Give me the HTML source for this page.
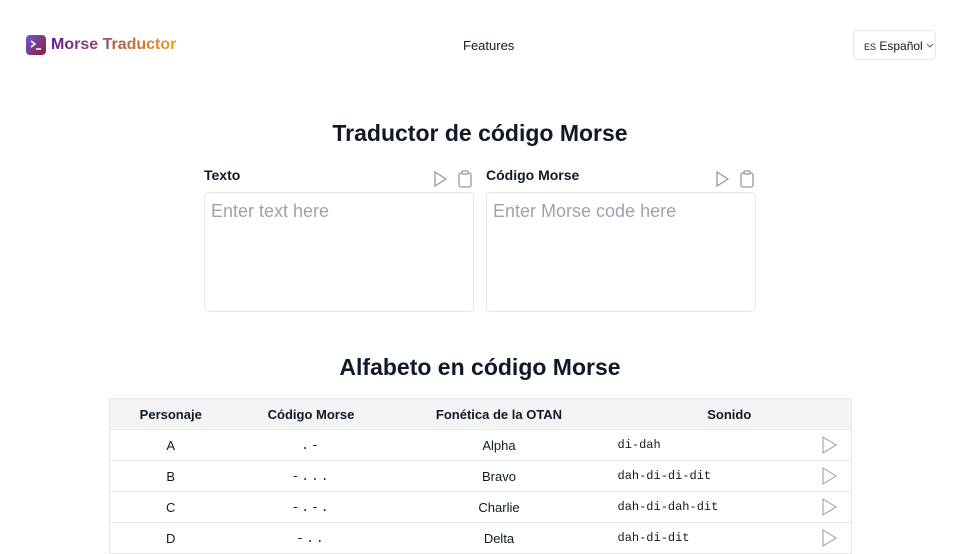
<!DOCTYPE html>
<html><head><meta charset="utf-8"><style>
*{box-sizing:border-box;margin:0;padding:0}
body{width:960px;height:540px;overflow:hidden;background:#fff;font-family:"Liberation Sans",sans-serif;color:#111827;position:relative}
.abs{position:absolute}
.logo{left:26px;top:35px;width:20px;height:20px;border-radius:4px;background:linear-gradient(135deg,#6d5bd0,#8b1d3a)}
.brand{left:51px;top:36px;font-size:16px;font-weight:bold;background:linear-gradient(90deg,#5b1a9a,#f59e0b);-webkit-background-clip:text;color:transparent}
.feat{left:463px;top:38px;font-size:13px}
.lang{left:853px;top:30px;width:83px;height:30px;border:1px solid #e5e7eb;border-radius:5px;font-size:12px;padding:8px 0 0 10px}
h1{position:absolute;left:0;width:960px;text-align:center;font-size:23px;font-weight:bold}
.lbl{font-size:14px;font-weight:bold;top:167px}
.ta{top:192px;width:270px;height:120px;border:1px solid #e5e7eb;border-radius:5px;padding:8px 6px;font-size:18px;color:#9ca3af}
table{position:absolute;left:109px;top:398px;width:743px;border-collapse:collapse;font-size:13px;border:1px solid #e5e7eb}
th{background:#f3f4f6;height:31px;font-weight:bold;text-align:center}
td{height:31px;border-top:1px solid #e5e7eb;text-align:center;padding-top:0}
td.c{letter-spacing:2px;font-family:"Liberation Mono",monospace}
td.m{font-family:"Liberation Mono",monospace;text-align:left;padding-left:10px;font-size:12px;position:relative}
td.m svg{position:absolute;right:14px;top:6px}
</style></head><body>
<div class="abs logo"><svg width="20" height="20"><path d="M5 6l4 3-4 3M10 14h5" stroke="#fff" stroke-width="1.5" fill="none"/></svg></div>
<div class="abs brand">Morse Traductor</div>
<div class="abs feat">Features</div>
<div class="abs lang"><span style="font-size:9px">ES</span> Español <svg width="8" height="6" style="vertical-align:1px"><path d="M1 1l3 3 3-3" stroke="#666" fill="none"/></svg></div>
<h1 style="top:120px">Traductor de código Morse</h1>
<div class="abs lbl" style="left:204px">Texto</div>
<div class="abs lbl" style="left:486px">Código Morse</div>
<svg class="abs" style="left:433px;top:170px" width="50" height="18"><path d="M2 2l11 7-11 7z" stroke="#999" fill="none" stroke-width="1.3"/><rect x="26" y="3" width="12" height="14" rx="2" stroke="#999" fill="none" stroke-width="1.3"/><rect x="29" y="1" width="6" height="3" rx="1" stroke="#999" fill="#fff" stroke-width="1.3"/></svg>
<svg class="abs" style="left:715px;top:170px" width="50" height="18"><path d="M2 2l11 7-11 7z" stroke="#999" fill="none" stroke-width="1.3"/><rect x="26" y="3" width="12" height="14" rx="2" stroke="#999" fill="none" stroke-width="1.3"/><rect x="29" y="1" width="6" height="3" rx="1" stroke="#999" fill="#fff" stroke-width="1.3"/></svg>
<div class="abs ta" style="left:204px">Enter text here</div>
<div class="abs ta" style="left:486px">Enter Morse code here</div>
<h1 style="top:354px">Alfabeto en código Morse</h1>
<table>
<tr><th style="width:122px">Personaje</th><th style="width:159px">Código Morse</th><th style="width:217px">Fonética de la OTAN</th><th>Sonido</th></tr>
<tr><td>A</td><td class="c">.-</td><td>Alpha</td><td class="m">di-dah<svg width="15" height="18"><path d="M1 1l13 8-13 8z" stroke="#999" fill="none"/></svg></td></tr>
<tr><td>B</td><td class="c">-...</td><td>Bravo</td><td class="m">dah-di-di-dit<svg width="15" height="18"><path d="M1 1l13 8-13 8z" stroke="#999" fill="none"/></svg></td></tr>
<tr><td>C</td><td class="c">-.-.</td><td>Charlie</td><td class="m">dah-di-dah-dit<svg width="15" height="18"><path d="M1 1l13 8-13 8z" stroke="#999" fill="none"/></svg></td></tr>
<tr><td>D</td><td class="c">-..</td><td>Delta</td><td class="m">dah-di-dit<svg width="15" height="18"><path d="M1 1l13 8-13 8z" stroke="#999" fill="none"/></svg></td></tr>
</table>
</body></html>
